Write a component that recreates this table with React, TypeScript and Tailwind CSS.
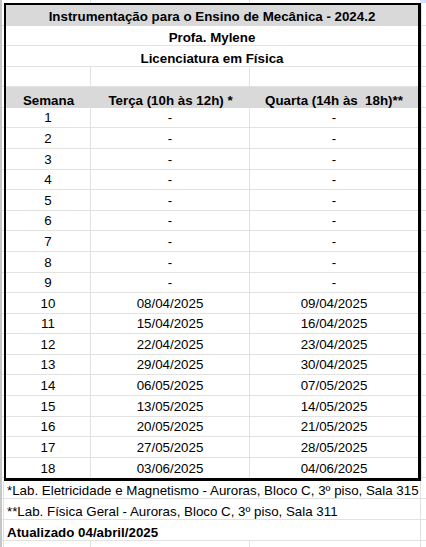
import React from 'react';

const ROW_H = 'h-[20.58px]';

const schedule: { week: number; tue: string; wed: string }[] = [
  { week: 1, tue: '-', wed: '-' },
  { week: 2, tue: '-', wed: '-' },
  { week: 3, tue: '-', wed: '-' },
  { week: 4, tue: '-', wed: '-' },
  { week: 5, tue: '-', wed: '-' },
  { week: 6, tue: '-', wed: '-' },
  { week: 7, tue: '-', wed: '-' },
  { week: 8, tue: '-', wed: '-' },
  { week: 9, tue: '-', wed: '-' },
  { week: 10, tue: '08/04/2025', wed: '09/04/2025' },
  { week: 11, tue: '15/04/2025', wed: '16/04/2025' },
  { week: 12, tue: '22/04/2025', wed: '23/04/2025' },
  { week: 13, tue: '29/04/2025', wed: '30/04/2025' },
  { week: 14, tue: '06/05/2025', wed: '07/05/2025' },
  { week: 15, tue: '13/05/2025', wed: '14/05/2025' },
  { week: 16, tue: '20/05/2025', wed: '21/05/2025' },
  { week: 17, tue: '27/05/2025', wed: '28/05/2025' },
  { week: 18, tue: '03/06/2025', wed: '04/06/2025' },
];

// gridline ticks that peek out on both sides of the bordered table
const EdgeTicks: React.FC<{ className: string }> = ({ className }) => (
  <div className={`flex flex-col pt-[2px] ${className}`}>
    {Array.from({ length: 23 }).map((_, i) => (
      <div key={i} className={`${ROW_H} shrink-0 border-b border-[#e2e2e2]`} />
    ))}
  </div>
);

const MergedRow: React.FC<{ text: string; gray?: boolean; pad?: string }> = ({ text, gray, pad = '' }) => (
  <div
    className={`${ROW_H} flex items-end justify-center font-bold leading-[15px] border-b ${
      gray ? 'bg-[#d9d9d9] border-[#d9d9d9]' : 'border-[#e2e2e2]'
    } ${pad}`}
  >
    {text}
  </div>
);

export default function App() {
  return (
    <div className="w-[426px] h-[547px] overflow-hidden bg-white flex font-['Liberation_Sans',Arial,sans-serif] text-[13.33px] text-black">
      <div className="w-[2px] shrink-0 bg-[#c4c7c5]" />

      <div className="flex-1 flex flex-col">
        {/* Column header remnants */}
        <div className="h-[3px] shrink-0 flex">
          <div className="w-[88px]" />
          <div className="w-px bg-[#e2e2e2]" />
          <div className="w-[158px]" />
          <div className="w-px bg-[#e2e2e2]" />
          <div className="w-[170px]" />
          <div className="flex-1 bg-[#d3e3fd]" />
        </div>

        <div className="flex shrink-0">
          <EdgeTicks className="w-[2px]" />

          {/* Schedule table */}
          <div className="w-[417px] border-l-2 border-t-2 border-r-[3px] border-b-[3px] border-black">
            <MergedRow text="Instrumentação para o Ensino de Mecânica - 2024.2" gray pad="pb-[1px]" />
            <MergedRow text="Profa. Mylene" />
            <MergedRow text="Licenciatura em Física" />

            <div className={`${ROW_H} flex border-b border-[#e2e2e2]`}>
              <div className="w-[85px] border-r border-[#e2e2e2]" />
              <div className="w-[159px] border-r border-[#e2e2e2]" />
              <div className="flex-1" />
            </div>

            <div className={`${ROW_H} flex items-end font-bold leading-[15px] bg-[#d9d9d9]`}>
              <div className="w-[85px] text-center">Semana</div>
              <div className="w-[159px] text-center">Terça (10h às 12h) *</div>
              <div className="flex-1 text-center whitespace-pre">Quarta (14h às  18h)**</div>
            </div>

            {schedule.map((row, i) => (
              <div
                key={row.week}
                className={`${ROW_H} flex leading-[15px] ${
                  i < schedule.length - 1 ? 'border-b border-[#e2e2e2]' : ''
                }`}
              >
                <div className="w-[85px] flex items-end justify-center pb-[2px] border-r border-[#e2e2e2]">
                  {row.week}
                </div>
                <div className="w-[159px] flex items-end justify-center pb-[2px] border-r border-[#e2e2e2]">
                  {row.tue}
                </div>
                <div className="flex-1 flex items-end justify-center pb-[2px]">{row.wed}</div>
              </div>
            ))}
          </div>

          <EdgeTicks className="flex-1 border-l border-[#e2e2e2]" />
        </div>

        {/* Notes below the table */}
        <div className="flex flex-col leading-[12px] whitespace-nowrap">
          <div className="h-[17.5px] flex border-b border-[#e2e2e2]">
            <div className="w-px" />
            <div className="w-[418px] flex items-end pl-[3px] pb-[1px] border-x border-[#e2e2e2]">
              *Lab. Eletricidade e Magnetismo - Auroras, Bloco C, 3º piso, Sala 315
            </div>
          </div>
          <div className="h-[21px] flex border-b border-[#e2e2e2]">
            <div className="w-px" />
            <div className="w-[418px] flex items-end pl-[3px] pb-[1px] border-x border-[#e2e2e2]">
              **Lab. Física Geral - Auroras, Bloco C, 3º piso, Sala 311
            </div>
          </div>
          <div className="h-[21px] flex border-b border-[#e2e2e2]">
            <div className="w-px" />
            <div className="w-[418px] flex items-end pl-[3px] pb-[1px] font-bold border-x border-[#e2e2e2]">
              Atualizado 04/abril/2025
            </div>
          </div>
          <div className="h-[21px] flex">
            <div className="w-px" />
            <div className="w-[88px] border-x border-[#e2e2e2]" />
            <div className="w-[159px] border-r border-[#e2e2e2]" />
            <div className="w-[171px] border-r border-[#e2e2e2]" />
          </div>
        </div>
      </div>
    </div>
  );
}
